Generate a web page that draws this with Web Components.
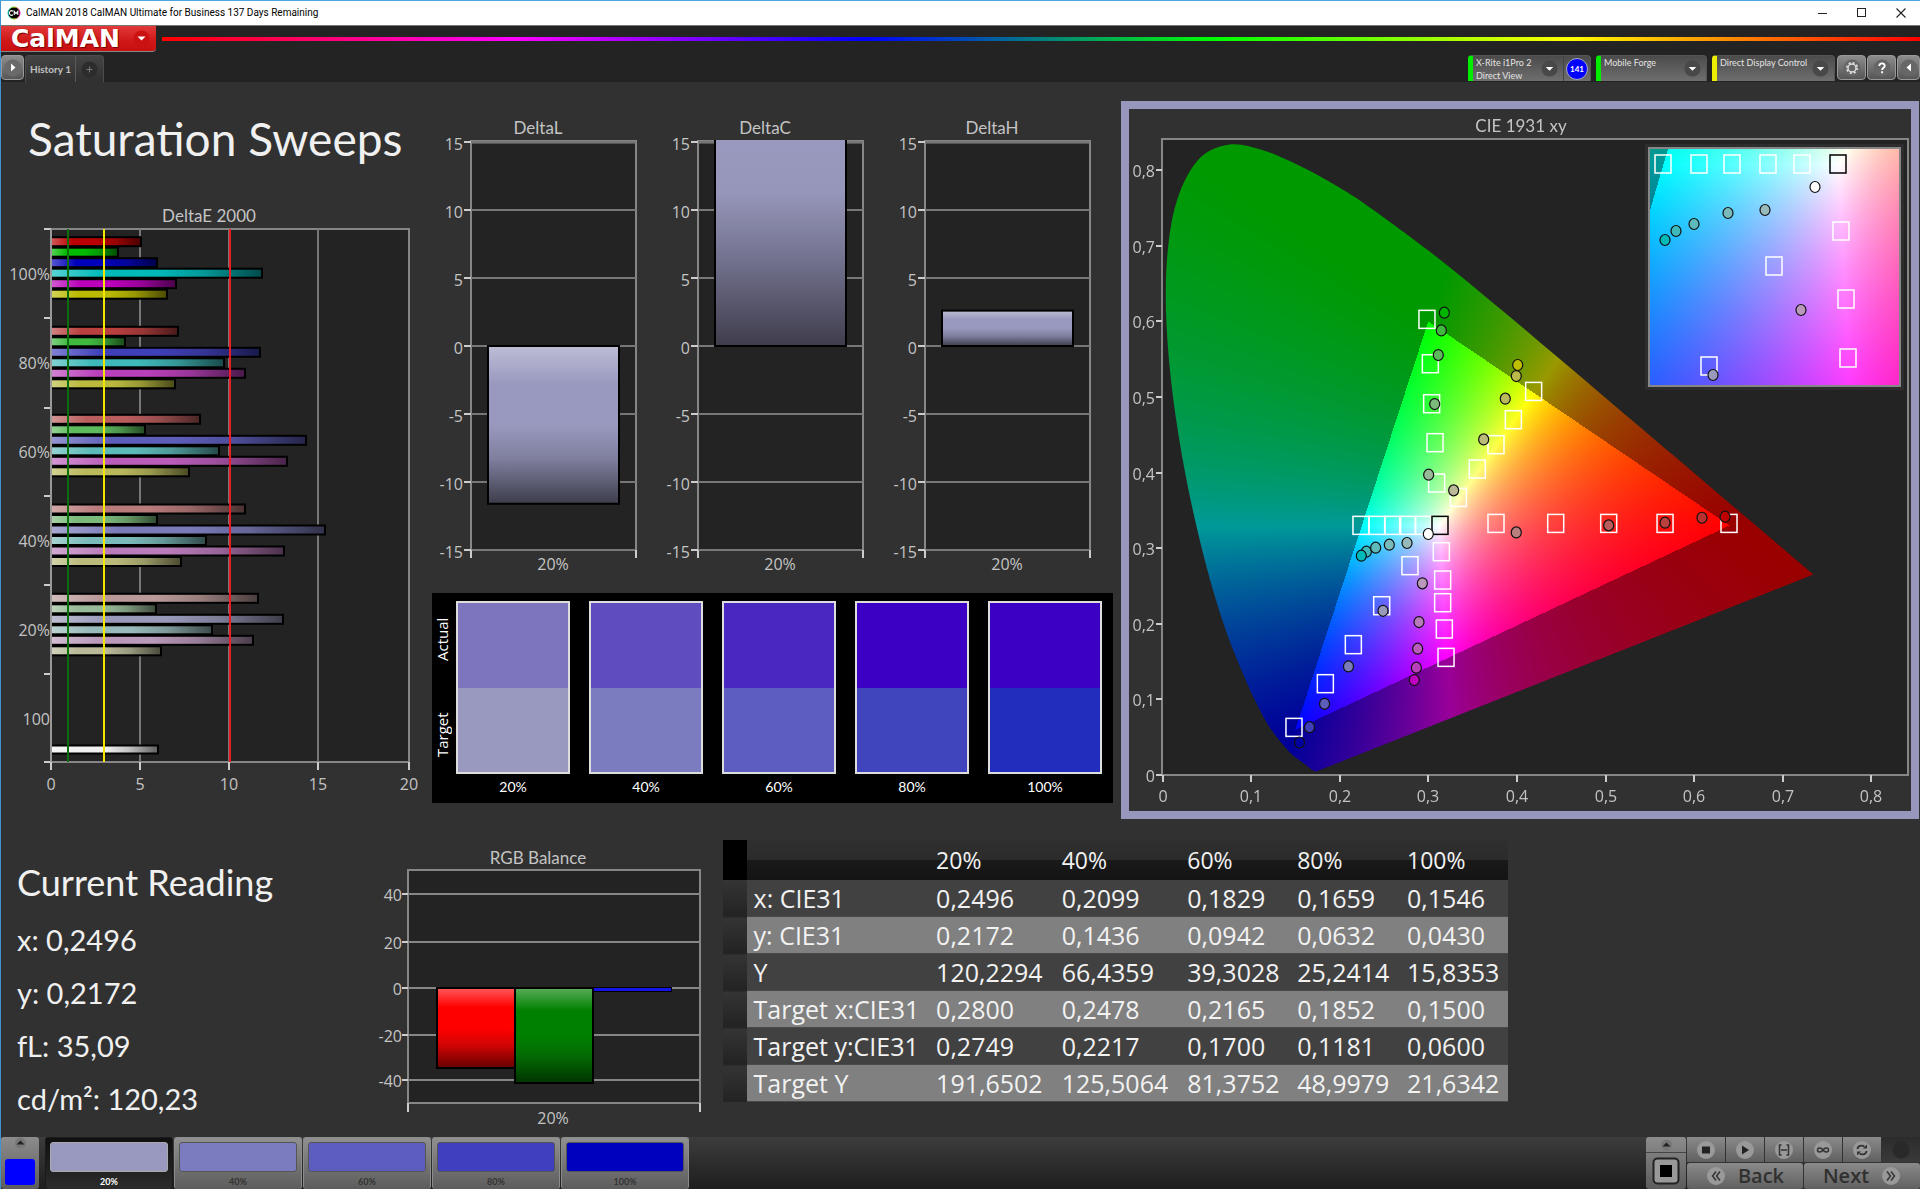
<!DOCTYPE html>
<html lang="en">
<head>
<meta charset="utf-8">
<title>CalMAN 2018</title>
<style>
  html, body { margin: 0; background: #313131; }
  body { font-family: Lato, "Open Sans", sans-serif; color: #c4c4c4; }
</style>
</head>
<body>
<calman-app></calman-app>
<script>
const define = (name, html, setup) => customElements.define(name, class extends HTMLElement {
  connectedCallback() {
    if (this.shadowRoot) return;
    const root = this.attachShadow({ mode: 'open' });
    root.innerHTML = typeof html === 'function' ? html(this) : html;
    if (setup) setup(root, this);
  }
});

/* ---------- SVG helpers shared by the charts ---------- */
const chartCss = `<style>
  :host { display: block; min-width: 0; }
  svg { display: block; width: 100%; height: auto; font-family: Lato, "Open Sans", sans-serif; font-size: 17px; fill: #c4c4c4; }
  .axis { font-family: "Open Sans", sans-serif; font-size: 16px; }
</style>`;
const line = (x1, y1, x2, y2, c = '#868686', w = 2) => `<line x1="${x1}" y1="${y1}" x2="${x2}" y2="${y2}" stroke="${c}" stroke-width="${w}"/>`;
const label = (x, y, s, anchor = 'middle', cls = 'axis') => `<text class="${cls}" x="${x}" y="${y + 6}" text-anchor="${anchor}">${s}</text>`;
const mix = (c, t, k) => c.map((v, i) => Math.round(v + (t[i] - v) * k));
const rgb = c => `rgb(${c.join(',')})`;
const gradient = (id, c, vertical) => `<linearGradient id="${id}" x1="0" y1="0" x2="${vertical ? 0 : 1}" y2="${vertical ? 1 : 0}">
  <stop offset="0" stop-color="${rgb(mix(c, [255, 255, 255], .35))}"/><stop offset=".24" stop-color="${rgb(c)}"/>
  <stop offset=".5" stop-color="${rgb(c)}"/><stop offset=".72" stop-color="${rgb(mix(c, [20, 20, 20], .2))}"/>
  <stop offset="1" stop-color="${rgb(mix(c, [0, 0, 0], .6))}"/></linearGradient>`;

/* ---------- Window frame ---------- */
define('window-bar', `<style>
  :host { display: flex; align-items: center; height: 24px; background: #fff; color: #000; border-bottom: 1px solid #777; font: 10px/24px Roboto, sans-serif; }
  .mark { width: 14px; height: 14px; margin: 0 5px 0 6px; }
  h1 { flex: 1; margin: 0; font: inherit; }
  button { width: 39px; height: 24px; border: 0; padding: 0; background: none; display: grid; place-items: center; }
</style>
<svg class="mark" viewBox="0 0 14 14"><defs><linearGradient id="r"><stop stop-color="#0cc"/><stop offset=".5" stop-color="#9d0"/><stop offset="1" stop-color="#e0a"/></linearGradient></defs>
<circle cx="7" cy="7" r="6" fill="#000" stroke="url(#r)"/><path d="M6 5.3A2.2 2.2 0 1 0 6 8.7M7.2 9V5.4L9 7.6l1.8-2.2V9" fill="none" stroke="#fff" stroke-width="1.1"/></svg>
<h1>CalMAN 2018 CalMAN Ultimate for Business 137 Days Remaining</h1>
<button aria-label="Minimize"><svg width="10" height="10"><path d="M0 5.5h9" stroke="#222"/></svg></button>
<button aria-label="Maximize"><svg width="10" height="10"><rect x=".5" y=".5" width="8" height="8" fill="none" stroke="#222"/></svg></button>
<button aria-label="Close"><svg width="10" height="10"><path d="M.5.5l9 9M9.500.5l-9 9" stroke="#222" stroke-width="1.1"/></svg></button>`);

define('brand-bar', `<style>
  :host { display: flex; align-items: flex-start; gap: 6px; height: 29px; background: #232323; }
  button { display: flex; align-items: center; justify-content: space-between; width: 155px; height: 26px; padding: 0 6px 0 10px; border: 0; border-bottom: 1px solid #888; border-radius: 0 0 4px 0; background: linear-gradient(#e23a3a, #d01717 60%, #c81010); color: #fff; font: bold 25px/24px "DejaVu Sans", sans-serif; text-shadow: 1px 1px 1px #700; }
  svg { width: 17px; height: 17px; }
  .spectrum { flex: 1; height: 4px; margin-top: 11px; background: linear-gradient(90deg, #f00, #f0f 20%, #00f 40%, #0f0 60%, #ff0 80%, #f00); }
</style>
<button><span>CalMAN</span><svg viewBox="0 0 17 17"><circle cx="8.500" cy="8.500" r="8" fill="#c11"/><path d="M4.500 6.500h8l-4 4z" fill="#fff"/></svg></button>
<div class="spectrum"></div>`);

const arrowDisc = '<svg class="disc" viewBox="0 0 18 18"><circle cx="9" cy="9" r="8.500" fill="#484848"/><path d="M5 7.500h8l-4 4z" fill="#fff"/></svg>';

define('device-tab', el => `<style>
  :host { display: flex; box-sizing: border-box; height: 26px; border-radius: 4px 4px 0 0; border: 1px solid #555; border-bottom: 0; overflow: hidden; background: linear-gradient(#4b4b4b, #6e6e6e); border-left: 5px solid ${el.getAttribute('status')}; }
  button { flex: 1; display: flex; justify-content: space-between; align-items: center; padding: 0 5px 0 3px; border: 0; background: none; color: #e4e4e4; font: 9px/13px Lato, sans-serif; text-align: left; }
  .disc { width: 17px; height: 17px; flex: none; }
  button span { align-self: flex-start; white-space: pre-line; }
</style><button aria-haspopup="menu"><span>${el.getAttribute('label').replace('|', '<br>')}</span>${arrowDisc}</button><slot></slot>`);

define('icon-button', `<style>
  :host { display: block; height: 25px; width: var(--w, 29px); }
  button { width: 100%; height: 100%; box-sizing: border-box; padding: 0; border: 1px solid #999; border-radius: 4px; background: linear-gradient(#8d8d8d, #565656); display: grid; place-items: center; }
  ::slotted(svg) { display: block; width: 18px; height: 18px; }
</style><button><slot></slot></button>`);

define('tab-bar', `<style>
  :host { display: flex; align-items: flex-start; height: 27px; background: #232323; }
  .tabs { display: flex; border: 1px solid #4c4c4c; border-bottom: 0; border-radius: 4px 4px 0 0; background: linear-gradient(#444, #303030); }
  .tabs button { height: 26px; padding: 0 4px; border: 0; background: none; color: #c0c0c0; font: bold 10px/26px Lato, sans-serif; }
  .tabs button + button { border-left: 1px solid #5a5a5a; padding: 0 4px; }
  .tabs svg { display: block; width: 19px; height: 19px; }
  .space { flex: 1; }
  device-tab { margin-right: 5px; }
  .reader { width: 123px; } .source { width: 111px; } .display { width: 123px; margin-right: 2px; }
  .count { flex: none; width: 26px; border-left: 1px solid #444; display: grid; place-items: center; }
  .count b { box-sizing: border-box; width: 22px; height: 22px; border-radius: 50%; border: 1px solid #aab; background: #00f; color: #fff; font: bold 8px/20px Lato, sans-serif; text-align: center; }
  icon-button { margin-right: 1px; } .edge { margin: 0; }
</style>
<icon-button style="--w:23px"><svg viewBox="0 0 18 18"><circle cx="9" cy="9" r="8.500" fill="#6a6a6a"/><path d="M7 4.500v8l4.500-4z" fill="#fff"/></svg></icon-button>
<div class="tabs"><button>History 1</button><button aria-label="Add tab"><svg viewBox="0 0 19 19"><circle cx="9.500" cy="9.500" r="8" fill="#2c2c2c"/><path d="M9.500 6.500v6M6.500 9.500h6" stroke="#777"/></svg></button></div>
<div class="space"></div>
<device-tab class="reader" status="#0e0" label="X-Rite i1Pro 2|Direct View"><div class="count"><b>141</b></div></device-tab>
<device-tab class="source" status="#0e0" label="Mobile Forge"></device-tab>
<device-tab class="display" status="#ee0" label="Direct Display Control"></device-tab>
<icon-button><svg viewBox="0 0 18 18"><circle cx="9" cy="9" r="8.500" fill="#666"/><circle cx="9" cy="9" r="4" fill="none" stroke="#ddd" stroke-width="1.500"/><circle cx="9" cy="9" r="5.300" fill="none" stroke="#ddd" stroke-width="1.600" stroke-dasharray="2.100 2.060"/></svg></icon-button>
<icon-button><svg viewBox="0 0 18 18"><circle cx="9" cy="9" r="8.500" fill="#666"/><path d="M6.300 7c0-3.600 5.600-3.400 5.400 0 0 1.800-2.600 1.900-2.600 4M9.100 12.300v1.900" fill="none" stroke="#fff" stroke-width="1.900"/></svg></icon-button>
<icon-button class="edge" style="--w:23px"><svg viewBox="0 0 18 18"><circle cx="9" cy="9" r="8.500" fill="#666"/><path d="M11 4.500v8L6.500 8.500z" fill="#fff"/></svg></icon-button>`);

/* ---------- Charts ---------- */
const groups = [
  ['100%', 46.7, [141, 118, 157, 262, 176, 167]],
  ['80%', 136.3, [178, 125, 260, 224, 245, 175]],
  ['60%', 224.3, [200, 145, 306, 219, 287, 189]],
  ['40%', 314, [245, 157, 325, 206, 284, 181]],
  ['20%', 403.3, [258, 156, 283, 212, 253, 161]]
];
const low = [0, 63, 93, 123, 153];
const hues = [[1, 0, 0], [0, 1, 0], [0, 0, 1], [0, 1, 1], [1, 0, 1], [1, 1, 0]];

define('delta-e-chart', () => {
  let defs = '', bars = '';
  groups.forEach(([, top, ends], g) => ends.forEach((end, i) => {
    const id = `g${g}${i}`;
    defs += gradient(id, hues[i].map(h => h ? 186 : low[g]));
    bars += `<rect x="50" y="${top + i * 10.5 + .5}" width="${end - 51}" height="9" fill="url(#${id})" stroke="#000" stroke-width="2"/>`;
  }));
  defs += gradient('gw', [240, 240, 240]);
  bars += '<rect x="50" y="555.500" width="107" height="8" fill="url(#gw)" stroke="#000" stroke-width="2"/>';
  const names = [...groups.map(g => g[0]), '100'];
  return chartCss + `<svg viewBox="0 0 431 620"><defs>${defs}</defs>
    ${label(208, 26, 'DeltaE 2000', 'middle', '')}
    <rect x="50" y="39" width="358" height="533" fill="#232323" stroke="#868686" stroke-width="2"/>
    ${[139, 228, 317].map(x => line(x, 39, x, 572, '#777')).join('')}${bars}
    ${[39, 128, 218, 306, 395, 484, 572].map(y => line(43, y, 50, y, '#ccc')).join('')}
    ${line(50, 39, 50, 572, '#999')}
    ${[50, 139, 228, 317, 408].map((x, i) => line(x, 572, x, 580, '#ccc') + label(x, 594, i * 5)).join('')}
    ${names.map((n, i) => label(49, 84 + i * 89, n, 'end')).join('')}
    ${line(67, 39, 67, 572, '#0a6e0a')}${line(103, 39, 103, 572, '#f2e600')}${line(229, 39, 229, 572, '#e81c24')}
  </svg>`;
});

define('delta-chart', el => {
  const v = +el.getAttribute('value'), zero = 236, unit = 13.6;
  const y1 = Math.max(31, zero - Math.max(v, 0) * unit), y2 = zero - Math.min(v, 0) * unit;
  const over = v > 15;
  return chartCss + `<svg viewBox="0 0 227 483"><defs>${gradient('g', [153, 153, 191], true)}
    <linearGradient id="o" x1="0" y1="0" x2="0" y2="1"><stop stop-color="#9999bf"/><stop offset=".25" stop-color="#9696ba"/><stop offset=".6" stop-color="#706f8b"/><stop offset="1" stop-color="#3f3d4c"/></linearGradient></defs>
    ${label(106, 18, el.getAttribute('name'), 'middle', '')}
    <rect x="39" y="31" width="165" height="409" fill="#232323" stroke="#868686" stroke-width="2"/>
    ${line(38, 32, 205, 32, '#868686', 3)}
    ${[15, 10, 5, 0, -5, -10, -15].map(t => { const y = Math.round(zero - t * unit); return line(39, y, 204, y, '#777') + line(32, y, 39, y, '#ccc') + label(31, y + 2, t, 'end'); }).join('')}
    <rect x="56" y="${y1}" width="131" height="${y2 - y1}" fill="url(#${over ? 'o' : 'g'})" stroke="#000" stroke-width="2"/>
    ${over ? line(57, 31, 186, 31, '#9999bf') : ''}
    ${line(39, 440, 39, 448, '#ccc')}${line(204, 440, 204, 448, '#ccc')}
    ${label(121, 454, '20%')}
  </svg>`;
});

define('rgb-chart', () => chartCss + `<svg viewBox="0 0 352 297"><defs>${gradient('r', [255, 0, 0], true)}${gradient('g', [0, 128, 0], true)}</defs>
    ${label(167, 18, 'RGB Balance', 'middle', '')}
    <rect x="37" y="30" width="292" height="233" fill="#232323" stroke="#868686" stroke-width="2"/>
    ${[[40, 54], [20, 102], [0, 148], [-20, 195], [-40, 240]].map(([t, y]) => line(37, y, 329, y) + line(31, y, 37, y, '#ccc') + label(31, y + 1, t, 'end')).join('')}
    <rect x="66" y="148" width="78" height="80" fill="url(#r)" stroke="#000" stroke-width="2"/>
    <rect x="144" y="148" width="78" height="95" fill="url(#g)" stroke="#000" stroke-width="2"/>
    <rect x="222" y="147" width="79" height="5" fill="#000"/><rect x="223" y="148" width="77" height="3" fill="#1414e6"/>
    ${line(37, 263, 37, 272, '#ccc')}${line(329, 263, 329, 272, '#ccc')}
    ${label(182, 278, '20%')}
  </svg>`);

define('swatch-compare', () => {
  const data = [['20%', '#7d75bd', '#9999bf'], ['40%', '#5f4dbf', '#7b7bc0'], ['60%', '#4828c1', '#5d5dc0'], ['80%', '#3b00c4', '#4045bd'], ['100%', '#3b00c4', '#222dbe']];
  return `<style>
    :host { display: flex; box-sizing: border-box; height: 210px; padding: 8px 11px 0 0; background: #000; color: #fff; font: 14px/26px Lato, sans-serif; }
    .side { display: flex; flex-direction: column; gap: 20px; width: 20px; margin-right: 4px; height: 172px; }
    .side span { flex: 1; writing-mode: vertical-rl; transform: rotate(180deg); text-align: center; font: 15px/20px "Open Sans", sans-serif; }
    .grid { flex: 1; display: grid; grid-template-columns: repeat(5, 1fr); gap: 19px; }
    figure { margin: 0; text-align: center; }
    .pair { box-sizing: border-box; height: 173px; border: 2px solid #ddd; display: flex; flex-direction: column; }
    i { flex: 1; }
  </style><div class="side"><span>Actual</span><span>Target</span></div>
  <div class="grid">${data.map(([n, a, t]) => `<figure><div class="pair"><i style="background:${a}"></i><i style="background:${t}"></i></div><figcaption>${n}</figcaption></figure>`).join('')}</div>`;
});

/* ---------- CIE 1931 chromaticity diagram ---------- */
const X0 = 33.5, Y0 = 666, SX = 886, SY = 756;
const locus = [[.1741, .005], [.1714, .0051], [.1689, .0069], [.1644, .0109], [.1566, .0177], [.144, .0297], [.1241, .0578], [.1096, .0868], [.0913, .1327], [.0687, .2007], [.0454, .295], [.0235, .4127], [.0082, .5384], [.0039, .6548], [.0139, .7502], [.0389, .812], [.0743, .8338], [.1142, .8262], [.1547, .8059], [.1929, .7816], [.2296, .7543], [.3016, .6923], [.3731, .6245], [.4441, .5547], [.5125, .4866], [.5752, .4242], [.627, .3725], [.6658, .334], [.6915, .3083], [.719, .2809], [.7347, .2653]];
const targets = [[.2985, .6027], [.3023, .544], [.3038, .4911], [.3076, .4396], [.3094, .3862], [.4189, .5074], [.396, .47], [.3764, .4369], [.3553, .4047], [.3339, .3672], [.224, .3302], [.2421, .3302], [.2598, .3302], [.2767, .3302], [.2944, .3302], [.3764, .3328], [.4438, .3328], [.5036, .3328], [.5672, .3328], [.6394, .3328], [.3147, .2954], [.3162, .2579], [.3162, .2279], [.3181, .1931], [.32, .1556], [.2793, .2769], [.2474, .2239], [.2154, .1724], [.1838, .1208], [.1484, .063]];
const readings = [
  [.3181, .6115, '#00b400'], [.3147, .5881, '#3fba3f'], [.3113, .5555, '#5dba5d'], [.3072, .4907, '#7bba7b'], [.3004, .3972, '#99ba99'],
  [.4009, .5423, '#bfbf00'], [.3993, .5277, '#baba4a'], [.3869, .4978, '#baba5d'], [.3625, .4439, '#baba7b'], [.3286, .3765, '#baba99'],
  [.6349, .3417, '#bf0000'], [.6089, .3403, '#ba3030'], [.5672, .3337, '#ba3f3f'], [.5036, .3302, '#ba5d5d'], [.3993, .3209, '#ba8080'],
  [.2301, .2954, '#3fbaba'], [.2244, .2901, '#00baba'], [.2406, .3007, '#5dbaba'], [.256, .3046, '#7bbaba'], [.276, .3069, '#99baba'],
  [.2842, .1256, '#bf00bf'], [.2865, .1419, '#ba3fba'], [.288, .1671, '#ba5dba'], [.2895, .2023, '#ba7bba'], [.2933, .2535, '#ba99ba'],
  [.1546, .043, '#0000a0'], [.1659, .0632, '#3f3fba'], [.1829, .0942, '#5d5dba'], [.2099, .1436, '#7b7bba'], [.2489, .2172, '#9999ba'], [.3, .3188, '#fff']];
const insetTargets = [[14, 16], [50, 16], [83, 16], [119, 16], [153, 16], [192, 83], [125, 118], [197, 151], [199, 210], [60, 218]];
const insetReadings = [[116, 62, '#99baba'], [79, 65, '#7bbaba'], [45, 76, '#5dbaba'], [27, 83, '#3fbaba'], [16, 92, '#00baba'], [152, 162, '#ba99ba'], [64, 227, '#9999ba'], [166, 39, '#fff']];

const insideGamut = (x, y) => {
  const p = [[.64, .33], [.3, .6], [.15, .06]];
  return p.every(([ax, ay], i) => { const [bx, by] = p[(i + 1) % 3]; return (bx - ax) * (y - ay) - (by - ay) * (x - ax) >= 0; });
};
const chromaColor = (x, y) => {
  const X = x / y, Z = (1 - x - y) / y;
  const c = [3.2406 * X - 1.5372 - .4986 * Z, -.9689 * X + 1.8758 + .0415 * Z, .0557 * X - .204 + 1.057 * Z].map(v => Math.max(v, 0));
  const m = Math.max(...c), k = insideGamut(x, y) ? 255 : 153;
  return c.map(v => k * v / m);
};
const paint = (w, h, toXY) => {
  const cv = document.createElement('canvas'); cv.width = w; cv.height = h;
  const ctx = cv.getContext('2d'), img = ctx.createImageData(w, h);
  for (let j = 0, n = 0; j < h; j++) for (let i = 0; i < w; i++, n += 4) {
    const [x, y] = toXY(i, j);
    if (y <= 0) continue;
    const c = chromaColor(x, y);
    img.data[n] = c[0]; img.data[n + 1] = c[1]; img.data[n + 2] = c[2]; img.data[n + 3] = 255;
  }
  ctx.putImageData(img, 0, 0);
  return cv;
};
const square = (x, y, c = '#fff') => `<rect x="${x - 8}" y="${y - 9}" width="16" height="18" fill="none" stroke="${c}" stroke-width="1.500"/>`;
const dot = (x, y, c) => `<ellipse cx="${x}" cy="${y}" rx="5" ry="5.500" fill="${c}" stroke="#111" stroke-width="1.200"/>`;

define('cie-diagram', () => {
  const px = x => X0 + x * SX, py = y => Y0 - y * SY;
  return chartCss + `<style>
    :host { border: 8px solid #9797be; display: grid; background: #313131; }
    canvas, svg { grid-area: 1 / 1; width: 100%; height: auto; display: block; }
  </style><canvas width="782" height="702"></canvas>
  <svg viewBox="0 0 782 702">
    ${label(392, 17, 'CIE 1931 xy', 'middle', '')}
    <rect x="33" y="30" width="746" height="636" fill="none" stroke="#868686" stroke-width="2"/>
    ${[0, 1, 2, 3, 4, 5, 6, 7, 8].map(i => {
      const t = i ? '0,' + i : '0', x = Math.round(px(i / 10)), y = Math.round(py(i / 10));
      return line(x, 666, x, 673, '#ccc') + label(x, 687, t) + line(27, y, 33, y, '#ccc') + label(26, y + 1, t, 'end');
    }).join('')}
    ${targets.map(([x, y]) => square(px(x), py(y))).join('')}${square(px(.3132), py(.3302), '#000')}
    ${readings.map(([x, y, c]) => dot(px(x), py(y), c)).join('')}
    <rect x="520" y="39" width="251" height="238" fill="none" stroke="#868686" stroke-width="2"/>
    <g transform="translate(520 39)">${insetTargets.map(([x, y]) => square(x, y)).join('')}${square(189, 16, '#000')}${insetReadings.map(r => dot(...r)).join('')}</g>
  </svg>`;
}, root => {
  const ctx = root.querySelector('canvas').getContext('2d');
  ctx.fillStyle = '#232323'; ctx.fillRect(33, 30, 746, 636);
  const pts = locus.map(([x, y]) => [X0 + x * SX, Y0 - y * SY]);
  const soft = document.createElement('canvas'); soft.width = 782; soft.height = 702;
  const s = soft.getContext('2d');
  s.beginPath(); s.moveTo(...pts[0]);
  for (let i = 0; i < pts.length - 1; i++) {
    const a = pts[Math.max(i - 1, 0)], b = pts[i], c = pts[i + 1], d = pts[Math.min(i + 2, pts.length - 1)];
    s.bezierCurveTo(b[0] + (c[0] - a[0]) / 6, b[1] + (c[1] - a[1]) / 6, c[0] - (d[0] - b[0]) / 6, c[1] - (d[1] - b[1]) / 6, c[0], c[1]);
  }
  s.closePath(); s.fill();
  s.globalCompositeOperation = 'source-in';
  s.drawImage(paint(782, 702, (i, j) => [(i + .5 - X0) / SX, (Y0 - j - .5) / SY]), 0, 0);
  ctx.drawImage(soft, 0, 0);
  ctx.fillStyle = '#2d2d2d'; ctx.fillRect(516, 35, 259, 246);
  ctx.drawImage(paint(251, 238, (i, j) => [.3127 + (i - 189) / 1990, .329 - (j - 16) / 1883]), 520, 39);
});

/* ---------- Readings and table ---------- */
define('current-reading', `<style>
  :host { display: block; padding: 19px 0 0 16px; color: #f0f0f0; }
  h2 { margin: 0 0 8px; font: 36px/46px Lato, sans-serif; }
  p { margin: 0; font: 29px/53px Lato, sans-serif; }
</style><h2>Current Reading</h2><p>x: 0,2496</p><p>y: 0,2172</p><p>fL: 35,09</p><p>cd/m²: 120,23</p>`);

define('reading-table', () => {
  const rows = [
    ['x: CIE31', '0,2496', '0,2099', '0,1829', '0,1659', '0,1546'],
    ['y: CIE31', '0,2172', '0,1436', '0,0942', '0,0632', '0,0430'],
    ['Y', '120,2294', '66,4359', '39,3028', '25,2414', '15,8353'],
    ['Target x:CIE31', '0,2800', '0,2478', '0,2165', '0,1852', '0,1500'],
    ['Target y:CIE31', '0,2749', '0,2217', '0,1700', '0,1181', '0,0600'],
    ['Target Y', '191,6502', '125,5064', '81,3752', '48,9979', '21,6342']];
  return `<style>
    :host { display: block; }
    table { width: 100%; table-layout: fixed; border-collapse: collapse; color: #f2f2f2; font: 25px/36px "Open Sans", sans-serif; }
    th, td { padding: 0 0 0 9px; font-weight: 400; text-align: left; white-space: nowrap; height: 36px; border-bottom: 1px solid #4a4a4a; }
    tbody th { padding-left: 7px; }
    thead th { height: 40px; border: 0; font-size: 23px; }
    thead tr { background: linear-gradient(#2f2f2f, #2b2b2b 50%, #191919 51%, #141414); }
    thead td { border: 0; } thead .stub { background: #000; }
    tbody tr { background: #414141; } tbody tr:nth-child(even) { background: #808080; }
    tbody .stub { padding: 0; background: linear-gradient(#343434, #232323); border-color: #262626; }
  </style><table><colgroup><col style="width:3%"><col style="width:23%"><col style="width:16%"><col style="width:16%"><col style="width:14%"><col style="width:14%"><col style="width:14%"></colgroup>
  <thead><tr><td class="stub"></td><td></td>${['20%', '40%', '60%', '80%', '100%'].map(t => `<th scope="col">${t}</th>`).join('')}</tr></thead>
  <tbody>${rows.map(r => `<tr><td class="stub"></td><th scope="row">${r[0]}</th>${r.slice(1).map(c => `<td>${c}</td>`).join('')}</tr>`).join('')}</tbody></table>`;
});

/* ---------- Bottom bar ---------- */
define('level-button', el => `<style>
  :host { display: block; width: 128px; }
  button { width: 100%; height: 52px; box-sizing: border-box; padding: 4px 4px 0; border: 1px solid #8c8c8c; border-bottom: 0; border-radius: 3px; background: linear-gradient(#909090, #5c5c5c); color: #333; font: bold 9px/19px Lato, sans-serif; }
  i { display: block; height: 30px; box-sizing: border-box; border: 1px solid #555; border-radius: 3px; background: ${el.getAttribute('color')}; }
  :host([selected]) button { background: linear-gradient(#101010, #2c2c2c); border-color: #1a1a1a; color: #fff; }
  :host([selected]) i { border-color: #aaa; }
</style><button><i></i><slot></slot></button>`);

const up = '<svg width="13" height="12" viewBox="0 0 13 12"><circle cx="6.500" cy="6" r="5.500" fill="#777"/><path d="M2.500 7.500h8l-4-4z" fill="#222"/></svg>';
const glyph = d => `<svg width="20" height="20" viewBox="0 0 20 20"><circle cx="10" cy="10" r="9" fill="#999"/>${d}</svg>`;

define('transport-bar', `<style>
  :host { display: flex; height: 52px; background: linear-gradient(#3c3c3c, #1e1e1e); gap: 1px; }
  .pick, .stop { display: flex; flex-direction: column; align-items: center; background: linear-gradient(#8c8c8c, #5c5c5c); border-radius: 3px; }
  .pick { width: 38px; margin-right: 5px; justify-content: space-between; }
  button { border: 0; padding: 0; background: none; display: grid; place-items: center; }
  .pick b { width: 30px; height: 26px; margin-bottom: 4px; border-radius: 3px; background: #00f; }
  .space { flex: 1; }
  .stop { width: 40px; }
  .stop button { width: 100%; }
  .stop button:first-child { height: 16px; border-bottom: 1px solid #444; }
  .stop button:last-child { flex: 1; }
  .control { display: grid; grid-template-columns: repeat(6, 1fr); grid-template-rows: 25px 26px; gap: 1px; width: 233px; background: #333; }
  .control button { background: linear-gradient(#8a8a8a, #606060); color: #303030; }
  .control .idle { background: linear-gradient(#2c2c2c, #3a3a3a); }
  .control .wide { grid-column: span 3; display: flex; justify-content: center; align-items: center; gap: 12px; font: 600 20px/26px "Open Sans", sans-serif; border-radius: 3px; }
  svg { display: block; }
</style>
<div class="pick"><button aria-label="Expand swatches">${up}</button><b></b></div>
<level-button color="#9999bf" selected>20%</level-button><level-button color="#7b7bbf">40%</level-button><level-button color="#5d5dbf">60%</level-button><level-button color="#3f3fbf">80%</level-button><level-button color="#0000bf">100%</level-button>
<div class="space"></div>
<div class="stop"><button aria-label="Expand controls">${up}</button><button aria-label="Stop reading"><svg width="28" height="28" viewBox="0 0 28 28"><rect x="1.500" y="1.500" width="25" height="25" rx="4" fill="#999" stroke="#222" stroke-width="2"/><rect x="8" y="8" width="12" height="12" fill="#000"/></svg></button></div>
<div class="control">
  <button aria-label="Stop">${glyph('<path d="M6 6.500h8v7H6z" fill="#222"/>')}</button>
  <button aria-label="Play">${glyph('<path d="M7 5.500v9l7-4.500z" fill="#222"/>')}</button>
  <button aria-label="Series">${glyph('<path d="M7.500 5H5.500v10h2M12.500 5h2v10h-2M7 10h6" fill="none" stroke="#333" stroke-width="1.500"/>')}</button>
  <button aria-label="Continuous">${glyph('<path d="M10 10c-2-3-5.500-2.500-5.500 0s3.500 3 5.500 0 5.500-2.500 5.500 0-3.500 3-5.500 0z" fill="none" stroke="#333" stroke-width="1.500"/>')}</button>
  <button aria-label="Refresh">${glyph('<path d="M5.500 9c0-3 4-4.500 7-2.500M14.500 11c0 3-4 4.500-7 2.500" fill="none" stroke="#333" stroke-width="1.800"/><path d="M11 8.500h4v-4zM9 11.500H5v4z" fill="#333"/>')}</button>
  <button class="idle" aria-label="Status"><svg width="20" height="20"><circle cx="10" cy="10" r="8.500" fill="#292929"/></svg></button>
  <button class="wide">${glyph('<path d="M10 5.500L6.500 10l3.500 4.500M14 5.500L10.500 10l3.500 4.500" fill="none" stroke="#333" stroke-width="1.500"/>')}Back</button>
  <button class="wide">Next${glyph('<path d="M6 5.500L9.500 10 6 14.500M10 5.500l3.500 4.500-3.500 4.500" fill="none" stroke="#333" stroke-width="1.500"/>')}</button>
</div>`);

/* ---------- Page ---------- */
define('calman-app', `<style>
  :host { display: flex; flex-direction: column; box-sizing: border-box; min-height: 100vh; border-top: 1px solid #4aa5e0; border-left: 1px solid #3c93cf; background: #313131; }
  main { flex: 1; display: flex; flex-direction: column; gap: 21px; }
  .top { display: grid; grid-template-columns: 431fr 689fr 799fr; align-items: start; }
  .left, .middle { min-width: 0; }
  h2 { margin: 17px 0 11px 27px; font: 46px/80px Lato, sans-serif; color: #f0f0f0; white-space: nowrap; }
  .deltas { display: grid; grid-template-columns: repeat(3, 1fr); }
  .middle { padding: 28px 8px 0 0; }
  cie-diagram { margin: 19px 1px 0 0; }
  .bottom { display: grid; grid-template-columns: 370fr 352fr 785fr 412fr; align-items: start; }
</style>
<window-bar></window-bar><brand-bar></brand-bar><tab-bar></tab-bar>
<main>
  <section class="top">
    <div class="left"><h2>Saturation Sweeps</h2><delta-e-chart></delta-e-chart></div>
    <div class="middle"><div class="deltas"><delta-chart name="DeltaL" value="-11.600"></delta-chart><delta-chart name="DeltaC" value="16"></delta-chart><delta-chart name="DeltaH" value="2.600"></delta-chart></div><swatch-compare></swatch-compare></div>
    <cie-diagram></cie-diagram>
  </section>
  <section class="bottom"><current-reading></current-reading><rgb-chart></rgb-chart><reading-table></reading-table></section>
</main>
<transport-bar></transport-bar>`);
</script>
</body>
</html>
